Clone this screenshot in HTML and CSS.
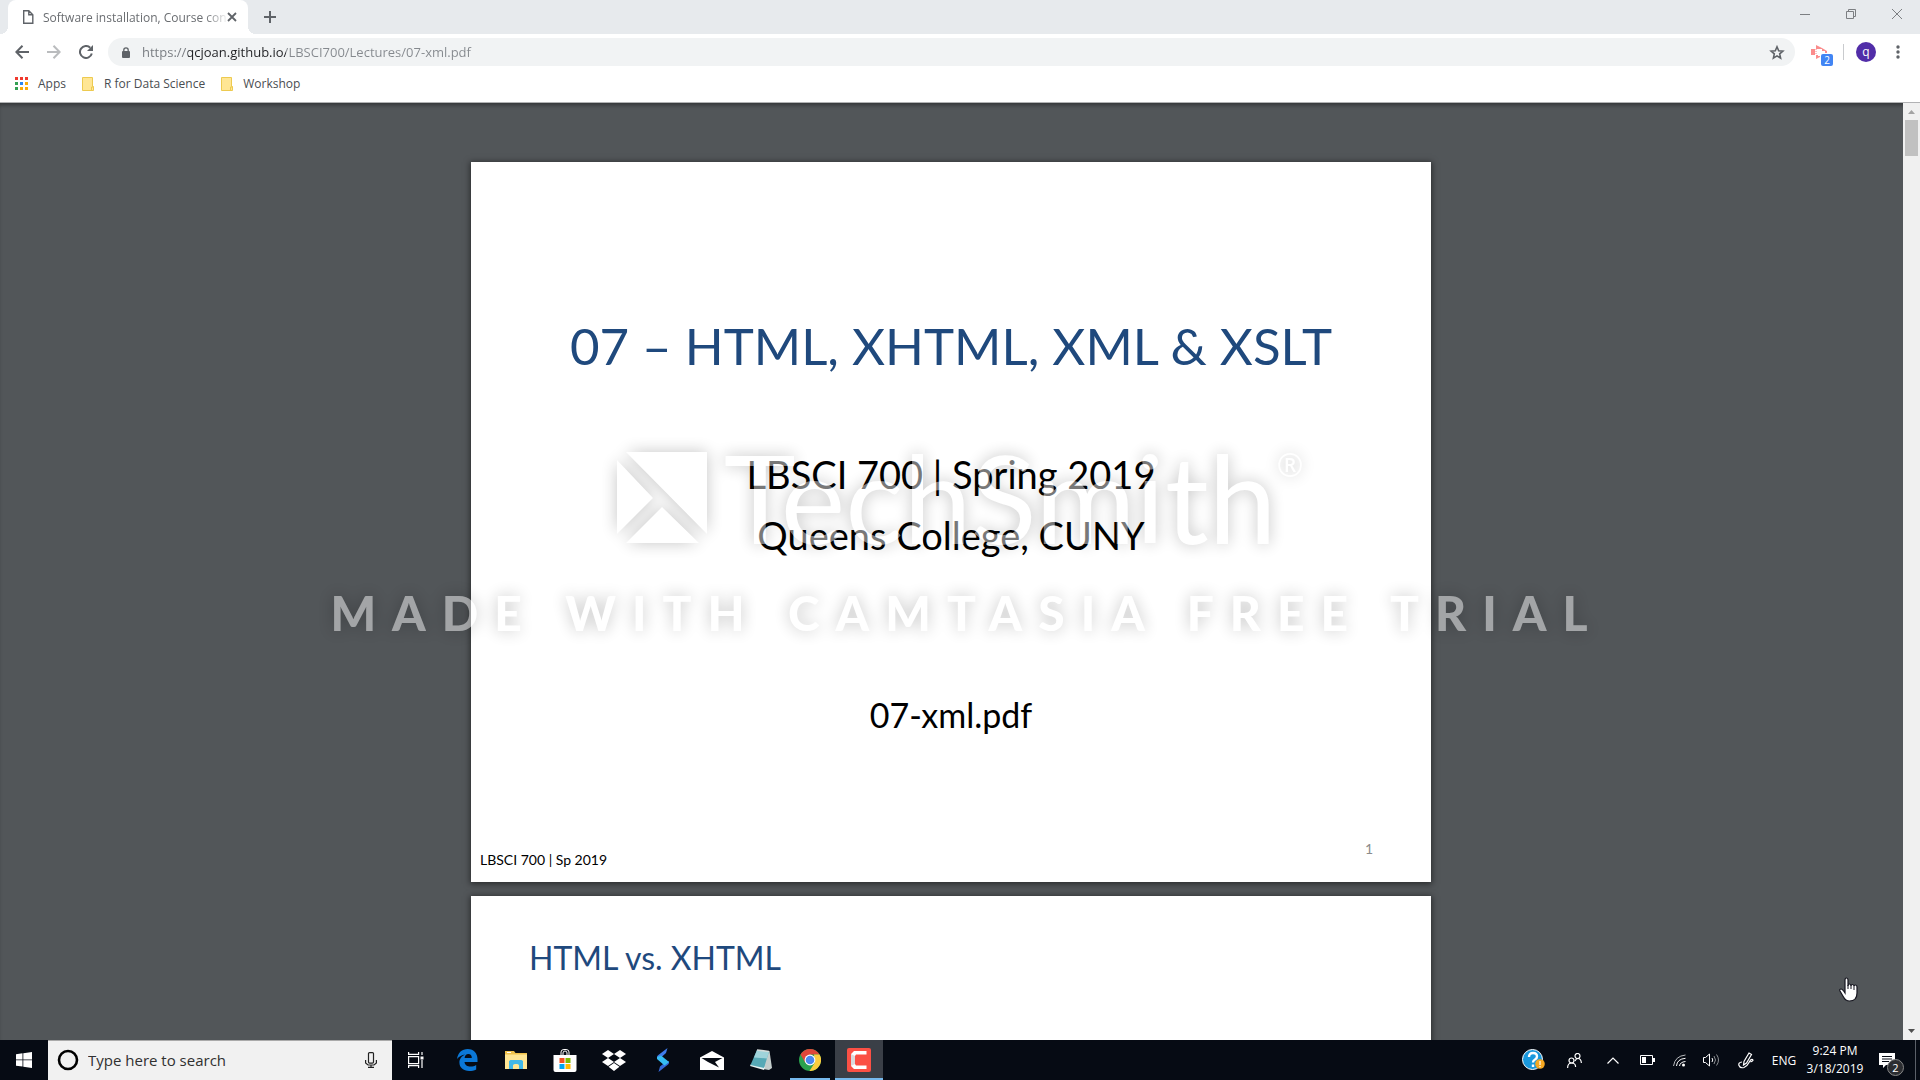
FILE: index.html
```html
<!DOCTYPE html>
<html lang="en">
<head>
<meta charset="utf-8">
<meta name="viewport" content="width=device-width, initial-scale=1">
<title>Software installation, Course content</title>
<link rel="stylesheet" href="styles.css">
</head>
<body>
<div class="desktop">
  <header class="browser">
    <div class="tabstrip">
      <div class="tab">
        <svg class="tab-icon" width="12" height="16" viewBox="0 0 12 16" fill="none" stroke="#5f6368" stroke-width="1.4"><path d="M1.7 1.7h5.100l4 4v8.600H1.700zM6.800 1.700v4h4"/></svg>
        <span class="tab-title">Software installation, Course con</span>
        <button class="tab-close" aria-label="Close tab"><svg width="10" height="10" viewBox="0 0 10 10" stroke="#5f6368" stroke-width="1.800"><path d="M1 1l8 8M9 1l-8 8"/></svg></button>
      </div>
      <button class="new-tab" aria-label="New tab"><svg width="12" height="12" viewBox="0 0 12 12" stroke="#5f6368" stroke-width="2"><path d="M6 0v12M0 6h12"/></svg></button>
      <div class="window-buttons">
        <button aria-label="Minimize"><svg width="10" height="10" viewBox="0 0 10 10" stroke="#7c7f82"><path d="M0 5.500h10"/></svg></button>
        <button aria-label="Restore"><svg width="10" height="10" viewBox="0 0 10 10" fill="none" stroke="#7c7f82"><path d="M.5 2.500h7v7h-7zM2.500 2.500v-2h7v7h-2"/></svg></button>
        <button aria-label="Close"><svg width="10" height="10" viewBox="0 0 10 10" stroke="#7c7f82"><path d="M0 0l10 10M10 0L0 10"/></svg></button>
      </div>
    </div>
    <nav class="toolbar" aria-label="Browser">
      <button class="nav-button" aria-label="Back"><svg width="14" height="14" viewBox="0 0 14 14" fill="none" stroke="#5f6368" stroke-width="2"><path d="M14 7H1.500M7.500.8L1.400 7l6.100 6.200"/></svg></button>
      <button class="nav-button" aria-label="Forward"><svg width="14" height="14" viewBox="0 0 14 14" fill="none" stroke="#babcbe" stroke-width="2"><path d="M0 7h12.500M6.500.8L12.600 7l-6.100 6.200"/></svg></button>
      <button class="nav-button" aria-label="Reload"><svg width="14" height="14" viewBox="0 0 14 14"><path d="M12.800 8.500A6 6 0 1 1 11.200 2.700" fill="none" stroke="#5f6368" stroke-width="2"/><path d="M14 0v6H8z" fill="#5f6368"/></svg></button>
      <div class="address">
        <svg width="8" height="11" viewBox="0 0 8 11"><path d="M1.800 5V3a2.200 2.200 0 0 1 4.400 0v2" fill="none" stroke="#5f6368" stroke-width="1.300"/><rect y="4" width="8" height="7" rx="1" fill="#5f6368"/></svg>
        <input class="url" type="text" aria-label="Address" value="https://qcjoan.github.io/LBSCI700/Lectures/07-xml.pdf">
        <button class="star" aria-label="Bookmark this page"><svg width="16" height="15" viewBox="0 0 16 15" fill="none" stroke="#5f6368" stroke-width="1.600"><path d="M8 1.800l1.700 3.900 4.200.4-3.200 2.800.9 4.200L8 10.900l-3.600 2.200.9-4.200-3.200-2.800 4.200-.4z"/></svg></button>
      </div>
      <button class="extension" aria-label="Extension, 2 notices">
        <svg width="16" height="14" viewBox="0 0 16 14" fill="#fb8c8c"><path d="M0 4h4v6H0zM5 0l6 3v1H5zM11 3l5 3v2h-2V6h-3zM5 10h2v1h2v1l-4 2z"/><path d="M5 4v6" stroke="#fb8c8c" stroke-dasharray="1 1"/></svg>
        <span class="extension-count">2</span>
      </button>
      <button class="avatar" aria-label="Profile">q</button>
      <button class="menu" aria-label="Menu"><svg width="4" height="14" viewBox="0 0 4 14" fill="#5f6368"><circle cx="2" cy="2" r="1.700"/><circle cx="2" cy="7" r="1.700"/><circle cx="2" cy="12" r="1.700"/></svg></button>
    </nav>
    <nav class="bookmarks" aria-label="Bookmarks">
      <a href="#apps"><svg width="13" height="13" viewBox="0 0 13 13"><path fill="#f03a2e" d="M0 0h3v3H0zM5 0h3v3H5zM10 0h3v3h-3z"/><path fill="#34a053" d="M0 5h3v3H0zM0 10h3v3H0z"/><path fill="#2a86f3" d="M5 5h3v3H5z"/><path fill="#fbab09" d="M10 5h3v3h-3zM5 10h3v3H5zM10 10h3v3h-3z"/></svg>Apps</a>
      <a href="#data-science"><svg width="12" height="14" viewBox="0 0 12 14"><path d="M.5.500h10v9h1v4H.500z" fill="#ffe694" stroke="#edca50"/><path d="M9.500 13.500v-3.500h2" fill="none" stroke="#edca50"/></svg>R for Data Science</a>
      <a href="#workshop"><svg width="12" height="14" viewBox="0 0 12 14"><path d="M.5.500h10v9h1v4H.500z" fill="#ffe694" stroke="#edca50"/><path d="M9.500 13.500v-3.500h2" fill="none" stroke="#edca50"/></svg>Workshop</a>
    </nav>
  </header>

  <main class="viewer">
    <div class="pages">
      <section class="slide slide-title">
        <h1>07 – HTML, XHTML, XML &amp; XSLT</h1>
        <p class="subtitle">LBSCI 700 | Spring 2019<br>Queens College, CUNY</p>
        <p class="filename">07-xml.pdf</p>
        <footer class="slide-footer"><span>LBSCI 700 | Sp 2019</span><span class="page-number">1</span></footer>
      </section>
      <section class="slide slide-content">
        <h2>HTML vs. XHTML</h2>
      </section>
    </div>
    <div class="scrollbar">
      <svg width="17" height="17" viewBox="0 0 17 17"><path d="M5 11l3.500-4 3.500 4z" fill="#a3a3a3"/></svg>
      <div class="thumb"></div>
      <svg width="17" height="17" viewBox="0 0 17 17"><path d="M5 6l3.500 4L12 6z" fill="#505050"/></svg>
    </div>
  </main>

  <footer class="taskbar">
    <button class="start" aria-label="Start"><svg width="16" height="16" viewBox="0 0 16 16" fill="#fff"><path d="M0 2.200L6.500 1.300v6.200H0zM7.300 1.200L16 0v7.500H7.300zM0 8.300h6.500v6.300L0 13.700zM7.300 8.300H16V16l-8.700-1.300z"/></svg></button>
    <div class="search">
      <svg width="22" height="22" viewBox="0 0 22 22" fill="none" stroke="#000" stroke-width="2.600"><circle cx="11" cy="11" r="9"/></svg>
      <input type="text" aria-label="Search" placeholder="Type here to search">
      <svg width="12" height="16" viewBox="0 0 12 16" fill="none" stroke="#222" stroke-width="1.200"><rect x="3.500" y=".6" width="5" height="10.500" rx="1"/><path d="M.6 8v3l2.400 2h6l2.400-2V8M6 13v2.400M3 15.400h6"/></svg>
    </div>
    <div class="apps">
      <button class="app task-view" aria-label="Task view"><svg width="16" height="16" viewBox="0 0 16 16" fill="none" stroke="#fff" stroke-width="1.200"><path d="M.6 4.600h10v7h-10zM.6 0v2.400h10V0M.6 16v-2.400h10V16M14 0v3M14 8v8"/><path d="M12.500 4.500h3v3h-3z" fill="#fff" stroke="none"/></svg></button>
      <button class="app" aria-label="Edge"><svg width="21" height="22" viewBox="0 0 21 22"><path fill="#0b78d7" d="M0 10C1 3.500 5 0 10.700 0 17 0 20.500 4.700 20.500 10v3H7.500c.2 3.200 3 4.600 6 4.600 2.300 0 4-.6 5.700-1.600v4.500c-2 1-4.500 1.500-7 1.500-6 0-9.800-3.600-9.800-8.500C2.400 10 4.700 6.900 8 5.400 5 5.800 2 7.300 0 10zM7.600 9h7.200c0-2.600-1.200-4-3.500-4-2 0-3.400 1.600-3.700 4z"/></svg></button>
      <button class="app" aria-label="File Explorer"><svg width="22" height="18" viewBox="0 0 22 18"><path fill="#f0c24b" d="M0 0h9l1.500 2H22v4H0z"/><path fill="#ffe694" d="M0 3.500h22V18H0z"/><path fill="#fff" d="M2 1h4v1H2z"/><path fill="#40b8e8" d="M4 10l1.500-1h11L18 10v8h-4v-3.500c0-1-1-1.500-3-1.500s-3 .5-3 1.500V18H4z"/></svg></button>
      <button class="app" aria-label="Store"><svg width="24" height="23" viewBox="0 0 24 23"><path d="M8 6V3q0-2.500 3-2.500h2q3 0 3 2.500v3M10 6V4q0-2 2-2t2 2v2" fill="none" stroke="#fff"/><path fill="#fff" d="M.5 6h23v15q0 2-2 2h-19q-2 0-2-2z"/><path fill="#f25022" d="M6.500 9h5v5h-5z"/><path fill="#7fba00" d="M12.500 9h5v5h-5z"/><path fill="#00a4ef" d="M6.500 15h5v5h-5z"/><path fill="#ffb900" d="M12.500 15h5v5h-5z"/></svg></button>
      <button class="app" aria-label="Dropbox"><svg width="24" height="21" viewBox="0 0 24 21" fill="#fff"><path d="M6 0l6 4-6 4-6-4zM18 0l6 4-6 4-6-4zM6 8l6 4-6 4-6-4zM18 8l6 4-6 4-6-4zM12 13l5.500 3.800L12 21l-5.500-4.200z"/></svg></button>
      <button class="app" aria-label="Sigma"><svg width="14" height="24" viewBox="0 0 14 24"><path fill="#3f7bea" d="M11.500 0L10 5 5 9.500 4 12 1 10.500V9Q1 7.500 3 6.500z"/><path fill="#3568d8" d="M2.500 24L4 18.500l5-4 1-2 3 1V15q0 1-1.500 2z"/><path fill="#35bdf3" d="M1 9l4-1.500L13 14l-4.500 3.500L1 11z"/></svg></button>
      <button class="app" aria-label="Mail"><svg width="24" height="19" viewBox="0 0 24 19" fill="#fff"><path d="M0 6.500L12 0l12 6.500V19H0z"/><path d="M1.500 7h21L15 11l4 5.500L8 11z" fill="#060b14"/></svg></button>
      <button class="app" aria-label="Notepad"><svg width="22" height="22" viewBox="0 0 22 22"><path fill="#c3cdcc" d="M18 2h1.500L22 19l-3 2-6-1z"/><path fill="#e8f2f2" d="M0 17l1-2 14 3-1 3z"/><path fill="#56a9b6" d="M.5 16L7 1l12 1.500L14 19z"/><path fill="#9fd3da" d="M4 8.500L7 1l12 1.500-2 7z"/><path d="M7 1l12 1.500" stroke="#d5dcda" stroke-width="1.500"/></svg></button>
      <button class="app running" aria-label="Chrome"><svg width="22" height="22" viewBox="0 0 22 22"><circle cx="11" cy="11" r="11" fill="#2aa14e"/><path fill="#df4639" d="M1.500 5.500A11 11 0 0 1 20.500 5.500H11L6.300 13.700z"/><path fill="#fccd3e" d="M20.500 5.500A11 11 0 0 1 10.500 22l5.200-8.300L15 5.500z"/><circle cx="11" cy="11" r="5.400" fill="#fff"/><circle cx="11" cy="11" r="4.300" fill="#4b87ee"/></svg></button>
      <button class="app running active" aria-label="Camtasia"><svg width="24" height="24" viewBox="0 0 24 24"><rect width="24" height="24" rx="2" fill="#fb5045"/><path fill="#fff" d="M7 3h12.500v3.500H9L8 8v8l1 1.500h10.500V21H7l-3-3V6z"/><path fill="#d9dadd" d="M4 6l4 2v8l-4 2z"/></svg></button>
    </div>
    <div class="tray">
      <button class="t-help" aria-label="Help"><svg width="23" height="22" viewBox="0 0 23 22"><circle cx="10.500" cy="10.500" r="10" fill="#1a98dc" stroke="#fff"/><path d="M7 8q0-4 4-4t4 3.500q0 2-2 3t-2 3M11 15.500v2.500" fill="none" stroke="#fff" stroke-width="2.400"/><circle cx="18" cy="15" r="4.800" fill="#f6a821"/><path d="M18 12v4M18 17v1.300" stroke="#fff" stroke-width="1.200"/></svg></button>
      <button class="t-people" aria-label="People"><svg width="15" height="15" viewBox="0 0 15 15" fill="none" stroke="#fff" stroke-width="1.200"><circle cx="4.500" cy="7.500" r="2.500"/><circle cx="10.500" cy="3" r="2.500"/><path d="M.6 15q0-5 4-5t4 4M8 8q1-2.500 3-2.500 3 0 3.400 4.500"/></svg></button>
      <button class="t-chevron" aria-label="Hidden icons"><svg width="12" height="7" viewBox="0 0 12 7" fill="none" stroke="#fff" stroke-width="1.200"><path d="M.5 6.500L6 1l5.500 5.500"/></svg></button>
      <button class="t-battery" aria-label="Battery"><svg width="15" height="10" viewBox="0 0 15 10"><path d="M.5.500h12v9H.500z" fill="none" stroke="#fff"/><path d="M2 2h4v6H2zM13 3h2v4h-2z" fill="#fff"/></svg></button>
      <button class="t-wifi" aria-label="Network"><svg width="13" height="13" viewBox="0 0 13 13" fill="none" stroke="#b8babd"><path d="M.5 12Q2 2 12.500 1"/><path d="M3.500 12Q4 5 12.500 4.300M6.500 12Q7 8 12.500 7.500" stroke="#fff"/><circle cx="10.500" cy="11" r="1.500" fill="#fff" stroke="none"/></svg></button>
      <button class="t-sound" aria-label="Volume"><svg width="17" height="14" viewBox="0 0 17 14" fill="none" stroke="#fff"><path d="M.5 4.500h2L6.500 1v12L2.500 9.500h-2zM9 5q1.500 2 0 4"/><path d="M11 3q3 4 0 8M13.500 1.500q4 5.500 0 11" stroke="#8c8f93"/></svg></button>
      <button class="t-pen" aria-label="Ink workspace"><svg width="17" height="17" viewBox="0 0 17 17" fill="none" stroke="#fff" stroke-width="1.200"><path d="M5.500 13L6 9.500l5-8.500 2.500 1.500-5 8.500zM4 10q-4 .5-3 3.500t5 2q3-1 5-5t3.500-3-2 2.500"/></svg></button>
      <button class="t-lang">ENG</button>
      <button class="t-clock"><time>9:24 PM<br>3/18/2019</time></button>
      <button class="t-action" aria-label="Notifications"><svg width="16" height="15" viewBox="0 0 16 15"><path fill="#fff" d="M0 0h16v12H7l-3 3v-3H0z"/><path d="M3 3.500h10M3 6h10M3 8.500h7" stroke="#060b14"/></svg><span class="notice-count">2</span></button>
    </div>
  </footer>

  <div class="watermark">
    <div class="brand">
      <svg width="90" height="91" viewBox="0 0 90 91" fill="#fff"><path d="M9 0h81v82zM0 8l36 38L0 82zM9 91l36-36 37 36z"/></svg>
      <span class="brand-name">TechSmith</span><span class="registered">®</span>
    </div>
    <p class="trial">MADE WITH CAMTASIA FREE TRIAL</p>
  </div>
  <svg class="pointer" width="19" height="25" viewBox="0 0 19 25"><path d="M6 16V3q0-2 1.500-2T9 3v6q0-2 1.500-2T12 9q0-1.500 1.500-1.500T15 9.500q0-1.500 1.500-1.500T18 10v6q0 8-7.500 8-4 0-6-4L1 14q-.8-2 1-2 1.500 0 4 4z" fill="#fff" stroke="#15151f" stroke-width="1.200"/><path d="M9 8v4M12 8.500V12M15 9.500V13" stroke="#15151f"/></svg>
</div>
</body>
</html>
```
FILE: styles.css
```css
* { box-sizing: border-box; }
body { margin: 0; font-family: "Open Sans", "Noto Sans", sans-serif; font-size: 12px; }
h1, h2, p { margin: 0; font-weight: 400; }
button { padding: 0; border: 0; background: none; font: inherit; color: inherit; display: flex; align-items: center; justify-content: center; }
input { border: 0; padding: 0; background: none; font: inherit; outline: 0; min-width: 0; }
svg { display: block; flex: none; }
.desktop { position: relative; display: flex; flex-direction: column; height: 100vh; overflow: hidden; }

/* Browser chrome */
.browser { flex: none; background: #fff; border-bottom: 1px solid #b1b2b4; }
.tabstrip { display: flex; height: 34px; background: #e7eaed; }
.tab { position: relative; display: flex; align-items: center; width: 240px; margin-left: 8px; padding: 0 11px 0 14px; background: #fff; border-radius: 8px 8px 0 0; color: #6a6d71; }
.tab::before, .tab::after { content: ""; position: absolute; bottom: 0; width: 8px; height: 8px; }
.tab::before { right: 100%; background: radial-gradient(circle at 0 0, #e7eaed 8px, #fff 8px); }
.tab::after { left: 100%; background: radial-gradient(circle at 100% 0, #e7eaed 8px, #fff 8px); }
.tab-title { flex: 1; margin: 0 0 0 9px; white-space: nowrap; mask-image: linear-gradient(to right, #000 88%, transparent 101%); }
.new-tab { width: 44px; }
.window-buttons { display: flex; margin-left: auto; padding-bottom: 6px; }
.window-buttons button { width: 46px; }
.toolbar { display: flex; align-items: center; height: 36px; padding: 0 14px 0 6px; }
.nav-button { width: 32px; height: 28px; }
.address { flex: 1; display: flex; align-items: center; height: 28px; margin-left: 6px; padding: 0 10px 0 14px; border-radius: 14px; background: #f1f3f4; }
.url { flex: 1; margin-left: 12px; height: 28px; font-size: 13px; color: transparent; background: linear-gradient(to right, #75797e 46px, #202124 46px, #202124 144px, #85898e 144px); -webkit-background-clip: text; background-clip: text; }
.extension { position: relative; width: 22px; height: 28px; margin-left: 16px; justify-content: flex-start; }
.extension-count { position: absolute; right: 0; bottom: 0; width: 12px; height: 12px; border-radius: 2px; background: #4285f4; color: #fff; font-size: 10px; line-height: 12px; text-align: center; }
.avatar { width: 20px; height: 20px; margin-left: 23px; padding-bottom: 2px; border-radius: 50%; background: #512da8; color: #fff; position: relative; }
.avatar::before { content: ""; position: absolute; left: -13px; top: 2px; width: 1px; height: 16px; background: #c9cbce; }
.menu { width: 16px; height: 28px; margin-left: 14px; }
.bookmarks { display: flex; gap: 16px; height: 32px; padding: 0 15px 5px; }
.bookmarks a { display: flex; align-items: center; gap: 10px; color: #4a4d51; text-decoration: none; }

/* PDF viewer */
.viewer { flex: 1; min-height: 0; display: flex; background: #525659; box-shadow: inset 0 4px 4px -2px rgba(0, 0, 0, .4); }
.pages { flex: 1; overflow: hidden; display: flex; flex-direction: column; align-items: center; gap: 14px; padding: 59px 1px 0 0; }
.slide { flex: none; width: 960px; max-width: 100%; aspect-ratio: 4 / 3; background: #fff; box-shadow: 0 1px 6px 1px rgba(0, 0, 0, .5); font-family: Lato, "Open Sans", sans-serif; color: #000; }
.slide-title { display: flex; flex-direction: column; text-align: center; }
.slide h1 { margin-top: 149px; font-size: 51px; line-height: 70px; color: #1f497d; }
.subtitle { margin-top: 63px; font-size: 38px; line-height: 61px; }
.filename { margin-top: 124px; font-size: 34px; line-height: 50px; }
.slide-footer { display: flex; justify-content: space-between; margin-top: auto; padding: 0 58px 12px 9px; font-size: 14px; line-height: 20px; }
.page-number { color: #8b8b8b; margin-top: -11px; }
.slide-content { padding: 38px 58px; }
.slide h2 { font-size: 32px; line-height: 48px; color: #1f497d; }
.scrollbar { width: 17px; display: flex; flex-direction: column; background: #f0f0f0; }
.thumb { width: 13px; height: 36px; margin: 0 2px auto; background: #c1c1c1; }

/* Taskbar */
.taskbar { flex: none; display: flex; height: 40px; background: #060b14; color: #fff; }
.start { width: 48px; }
.search { display: flex; align-items: center; width: 344px; padding: 0 15px 1px 9px; background: #f1f1f1; border-top: 1px solid #aaa; }
.search input { flex: 1; margin-left: 9px; font-size: 15px; }
.search input::placeholder { color: #303030; opacity: 1; }
.apps { display: flex; gap: 1px; }
.app { width: 48px; }
.task-view { margin-right: 2px; }
.running { background: linear-gradient(#76b9ed, #76b9ed) bottom / 40px 2px no-repeat; }
.running.active { background: linear-gradient(#76b9ed, #76b9ed) bottom / 48px 2px no-repeat #3a3f47; }
.tray { display: flex; margin-left: auto; padding-right: 4px; }
.t-help { width: 42px; }
.t-people { width: 40px; }
.t-chevron { width: 38px; }
.t-battery { width: 30px; }
.t-wifi { width: 34px; }
.t-sound { width: 30px; }
.t-pen { width: 40px; }
.t-lang { width: 36px; }
.t-clock { width: 66px; line-height: 18px; text-align: center; }
.t-action { position: relative; width: 48px; border-right: 1px solid #5b6068; }
.t-action svg { margin-right: 10px; }
.notice-count { position: absolute; left: 19px; top: 19px; width: 17px; height: 17px; border: 1px solid #888; border-radius: 50%; background: #2b2d31; line-height: 15px; text-align: center; font-size: 11px; }

/* Overlays */
.watermark { position: absolute; top: 437px; left: 0; right: 0; color: #fff; opacity: .47; filter: drop-shadow(0 0 8px rgba(0, 0, 0, .5)); pointer-events: none; text-align: center; white-space: nowrap; }
.brand { display: flex; justify-content: center; align-items: center; height: 120px; }
.brand-name { margin-left: 17px; font: 400 122px/120px Lato, sans-serif; }
.registered { align-self: flex-start; margin-top: 8px; font: 400 32px/40px "Open Sans", sans-serif; }
.trial { margin-top: 31px; padding-left: 14px; font: 900 48px/50px Lato, sans-serif; letter-spacing: 16px; }
.pointer { position: absolute; right: 62px; top: 977px; }
```
